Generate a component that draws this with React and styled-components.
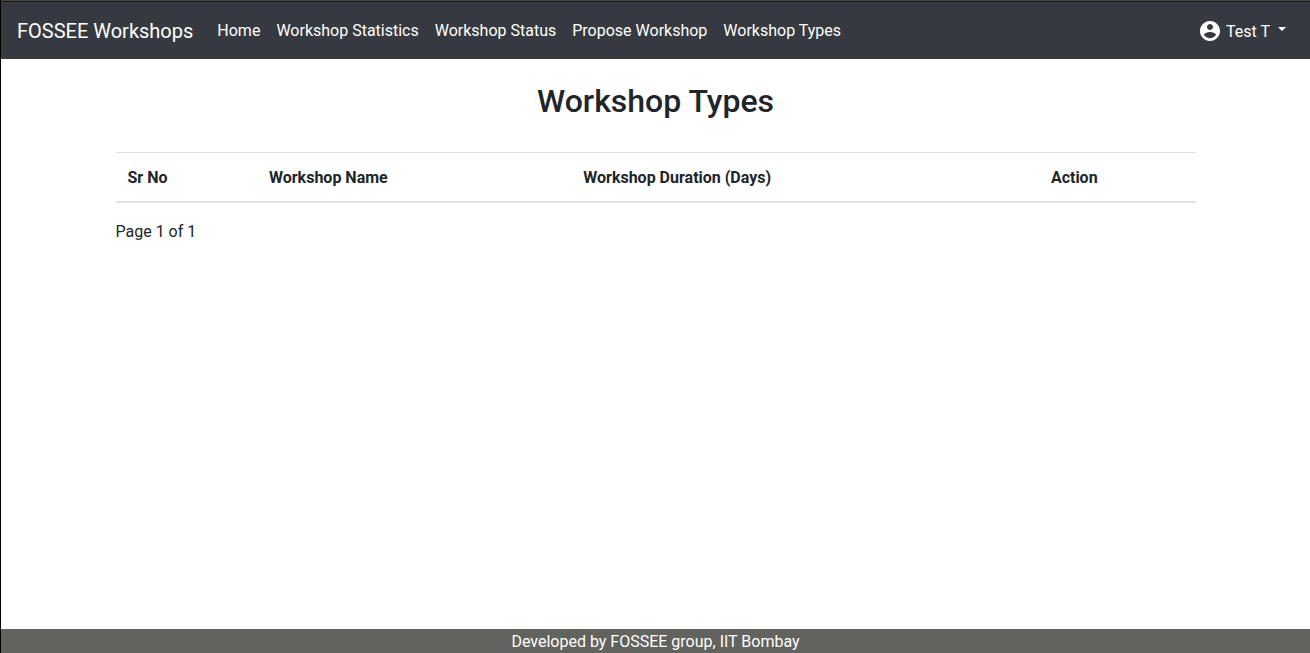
import React from "react";
import styled, { createGlobalStyle } from "styled-components";

const GlobalStyle = createGlobalStyle`
  *, *::before, *::after { box-sizing: border-box; }
  body {
    margin: 0;
    background: #fff;
    color: #212529;
    font: 400 16px/24px Roboto, "Liberation Sans", sans-serif;
  }
`;

const Page = styled.div`
  display: flex;
  flex-direction: column;
  min-height: 100vh;
  border-left: 1px solid #000;
`;

const TopEdge = styled.div`
  height: 2px;
  background: #454743;
  border-bottom: 1px solid #1a1b1c;
`;

const Navbar = styled.nav`
  display: flex;
  align-items: center;
  padding: 9px 16px 8px;
  background: #363a40;
  color: #fff;
`;

const Brand = styled.a`
  margin-right: 16px;
  font-size: 20px;
  line-height: 30px;
  color: inherit;
  text-decoration: none;
  white-space: nowrap;
`;

const NavList = styled.ul`
  display: flex;
  flex: 1;
  margin: 0;
  padding: 0;
  list-style: none;
`;

const NavLink = styled.a`
  display: block;
  padding: 8px;
  color: inherit;
  text-decoration: none;
  white-space: nowrap;
`;

const UserMenu = styled.button`
  display: flex;
  align-items: center;
  padding: 7px 8px;
  border: 0;
  background: none;
  color: inherit;
  font: inherit;
  white-space: nowrap;
  cursor: pointer;
`;

const UserName = styled.span`
  padding-top: 2px;
`;

const AccountIcon = styled.svg`
  width: 24px;
  height: 24px;
  margin-right: 4px;
  fill: currentColor;
`;

const Caret = styled.span`
  margin: 0 0 4px 8px;
  border-top: 4px solid;
  border-right: 4px solid transparent;
  border-left: 4px solid transparent;
`;

const Content = styled.main`
  flex: 1;
  width: 100%;
  max-width: 1140px;
  margin: 0 auto;
  padding: 23px 30px;
`;

const Title = styled.h1`
  margin: 0 0 32px;
  font-size: 32px;
  font-weight: 500;
  line-height: 38px;
  text-align: center;
`;

const Table = styled.table`
  width: 100%;
  margin-bottom: 17px;
  border-spacing: 0;
  table-layout: fixed;
`;

const HeaderCell = styled.th`
  width: ${(p) => p.$width};
  padding: 13px 12px 11px;
  border-top: 1px solid #dee2e6;
  border-bottom: 2px solid #dee2e6;
  font-weight: 700;
  text-align: left;
`;

const PageCount = styled.div``;

const Footer = styled.footer`
  padding-top: 1px;
  background: #62625f;
  color: #fff;
  line-height: 23px;
  text-align: center;
`;

const links = ["Home", "Workshop Statistics", "Workshop Status", "Propose Workshop", "Workshop Types"];

const columns = [
  { label: "Sr No", width: "13.1%" },
  { label: "Workshop Name", width: "29.1%" },
  { label: "Workshop Duration (Days)", width: "43.3%" },
  { label: "Action", width: "14.5%" },
];

export default function App() {
  return (
    <>
      <GlobalStyle />
      <Page>
        <TopEdge />
        <Navbar>
          <Brand href="#">FOSSEE Workshops</Brand>
          <NavList>
            {links.map((label) => (
              <li key={label}>
                <NavLink href="#">{label}</NavLink>
              </li>
            ))}
          </NavList>
          <UserMenu type="button" aria-haspopup="true">
            <AccountIcon viewBox="0 0 24 24" aria-hidden="true">
              <path d="M12 2C6.48 2 2 6.48 2 12s4.48 10 10 10 10-4.48 10-10S17.52 2 12 2zm0 3c1.66 0 3 1.34 3 3s-1.34 3-3 3-3-1.34-3-3 1.34-3 3-3zm0 14.2c-2.5 0-4.71-1.28-6-3.22.03-1.99 4-3.08 6-3.08 1.99 0 5.97 1.09 6 3.08-1.29 1.94-3.5 3.22-6 3.22z" />
            </AccountIcon>
            <UserName>Test T</UserName>
            <Caret />
          </UserMenu>
        </Navbar>
        <Content>
          <Title>Workshop Types</Title>
          <Table>
            <thead>
              <tr>
                {columns.map(({ label, width }) => (
                  <HeaderCell key={label} scope="col" $width={width}>
                    {label}
                  </HeaderCell>
                ))}
              </tr>
            </thead>
          </Table>
          <PageCount>Page 1 of 1</PageCount>
        </Content>
        <Footer>Developed by FOSSEE group, IIT Bombay</Footer>
      </Page>
    </>
  );
}
